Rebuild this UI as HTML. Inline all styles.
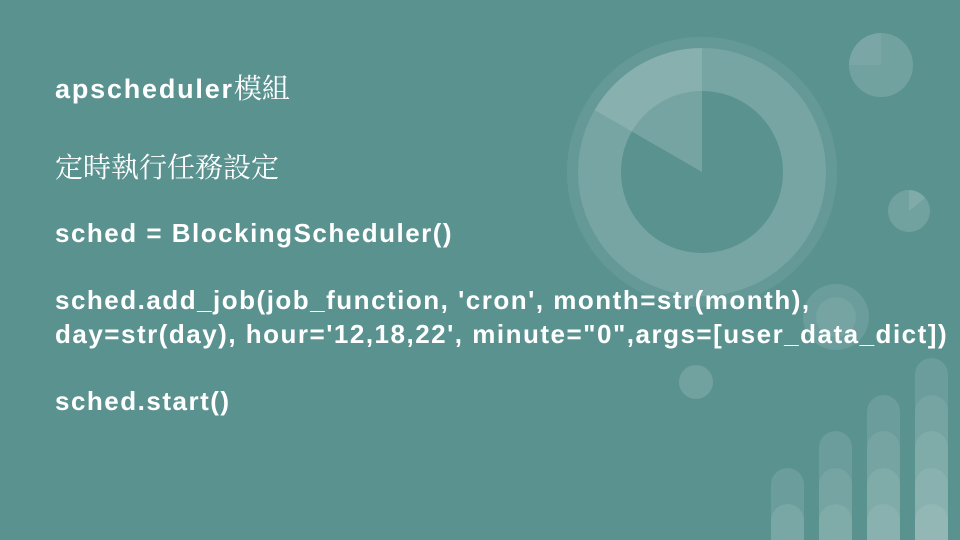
<!DOCTYPE html>
<html><head><meta charset="utf-8"><style>
html,body{margin:0;padding:0}
body{width:960px;height:540px;background:#5a9290;position:relative;overflow:hidden;font-family:"Liberation Sans","Noto Sans CJK TC",sans-serif;color:#fff}
svg{position:absolute;left:0;top:0}
.t{position:absolute;left:55px;white-space:nowrap;font-weight:bold;font-size:26px;letter-spacing:1.5px;line-height:1}
.cjk{font-family:"Noto Serif CJK SC","Noto Sans CJK TC",serif;font-weight:normal;letter-spacing:0}
</style></head><body>
<svg width="960" height="540" viewBox="0 0 960 540">
<g fill="#fff">
<path d="M702 172 m0 -135 a135 135 0 1 1 -0.01 0 Z M702 172 m0 -124 a124 124 0 1 0 0.01 0 Z" fill-rule="evenodd" opacity="0.07"/>
<path d="M702 172 m0 -124 a124 124 0 1 1 -0.01 0 Z M702 172 m0 -81 a81 81 0 1 0 0.01 0 Z" fill-rule="evenodd" opacity="0.18"/>
<path d="M702 172 L702 48 A124 124 0 0 0 594.6 110 Z" opacity="0.12"/>
<path d="M702 172 L702 91 A81 81 0 0 0 631.9 131.5 Z" opacity="0.06"/>
<circle cx="881" cy="65" r="32" opacity="0.15"/>
<path d="M881 65 L849 65 A32 32 0 0 1 881 33 Z" opacity="0.06"/>
<circle cx="909" cy="211" r="21" opacity="0.15"/>
<path d="M909 211 L909 190 A21 21 0 0 1 925 198 Z" opacity="0.1"/>
<circle cx="836" cy="317" r="33" opacity="0.1"/>
<circle cx="836" cy="317" r="20" opacity="0.08"/>
<circle cx="696" cy="382" r="17" opacity="0.15"/>
</g>
<g fill="#fff">
<rect x="771" y="468" width="33" height="90" rx="16.5" opacity="0.1"/>
<rect x="771" y="504" width="33" height="60" rx="16.5" opacity="0.1"/>
<rect x="819" y="431" width="33" height="130" rx="16.5" opacity="0.1"/>
<rect x="819" y="468" width="33" height="90" rx="16.5" opacity="0.08"/>
<rect x="819" y="504" width="33" height="60" rx="16.5" opacity="0.08"/>
<rect x="867" y="395" width="33" height="170" rx="16.5" opacity="0.1"/>
<rect x="867" y="431" width="33" height="130" rx="16.5" opacity="0.08"/>
<rect x="867" y="468" width="33" height="90" rx="16.5" opacity="0.08"/>
<rect x="867" y="504" width="33" height="60" rx="16.5" opacity="0.08"/>
<rect x="915" y="358" width="33" height="200" rx="16.5" opacity="0.1"/>
<rect x="915" y="395" width="33" height="170" rx="16.5" opacity="0.08"/>
<rect x="915" y="431" width="33" height="130" rx="16.5" opacity="0.08"/>
<rect x="915" y="468" width="33" height="90" rx="16.5" opacity="0.08"/>
<rect x="915" y="504" width="33" height="60" rx="16.5" opacity="0.08"/>
</g>
</svg>
<div class="t" style="top:73px;font-size:27px;letter-spacing:1.8px">apscheduler<span class="cjk" style="font-size:28px">模組</span></div>
<div class="t cjk" style="top:152px;font-size:28px">定時執行任務設定</div>
<div class="t" style="top:220px">sched = BlockingScheduler()</div>
<div class="t" style="top:287px">sched.add_job(job_function, 'cron', month=str(month),</div>
<div class="t" style="top:321px">day=str(day), hour='12,18,22', minute="0",args=[user_data_dict])</div>
<div class="t" style="top:388px">sched.start()</div>
</body></html>
